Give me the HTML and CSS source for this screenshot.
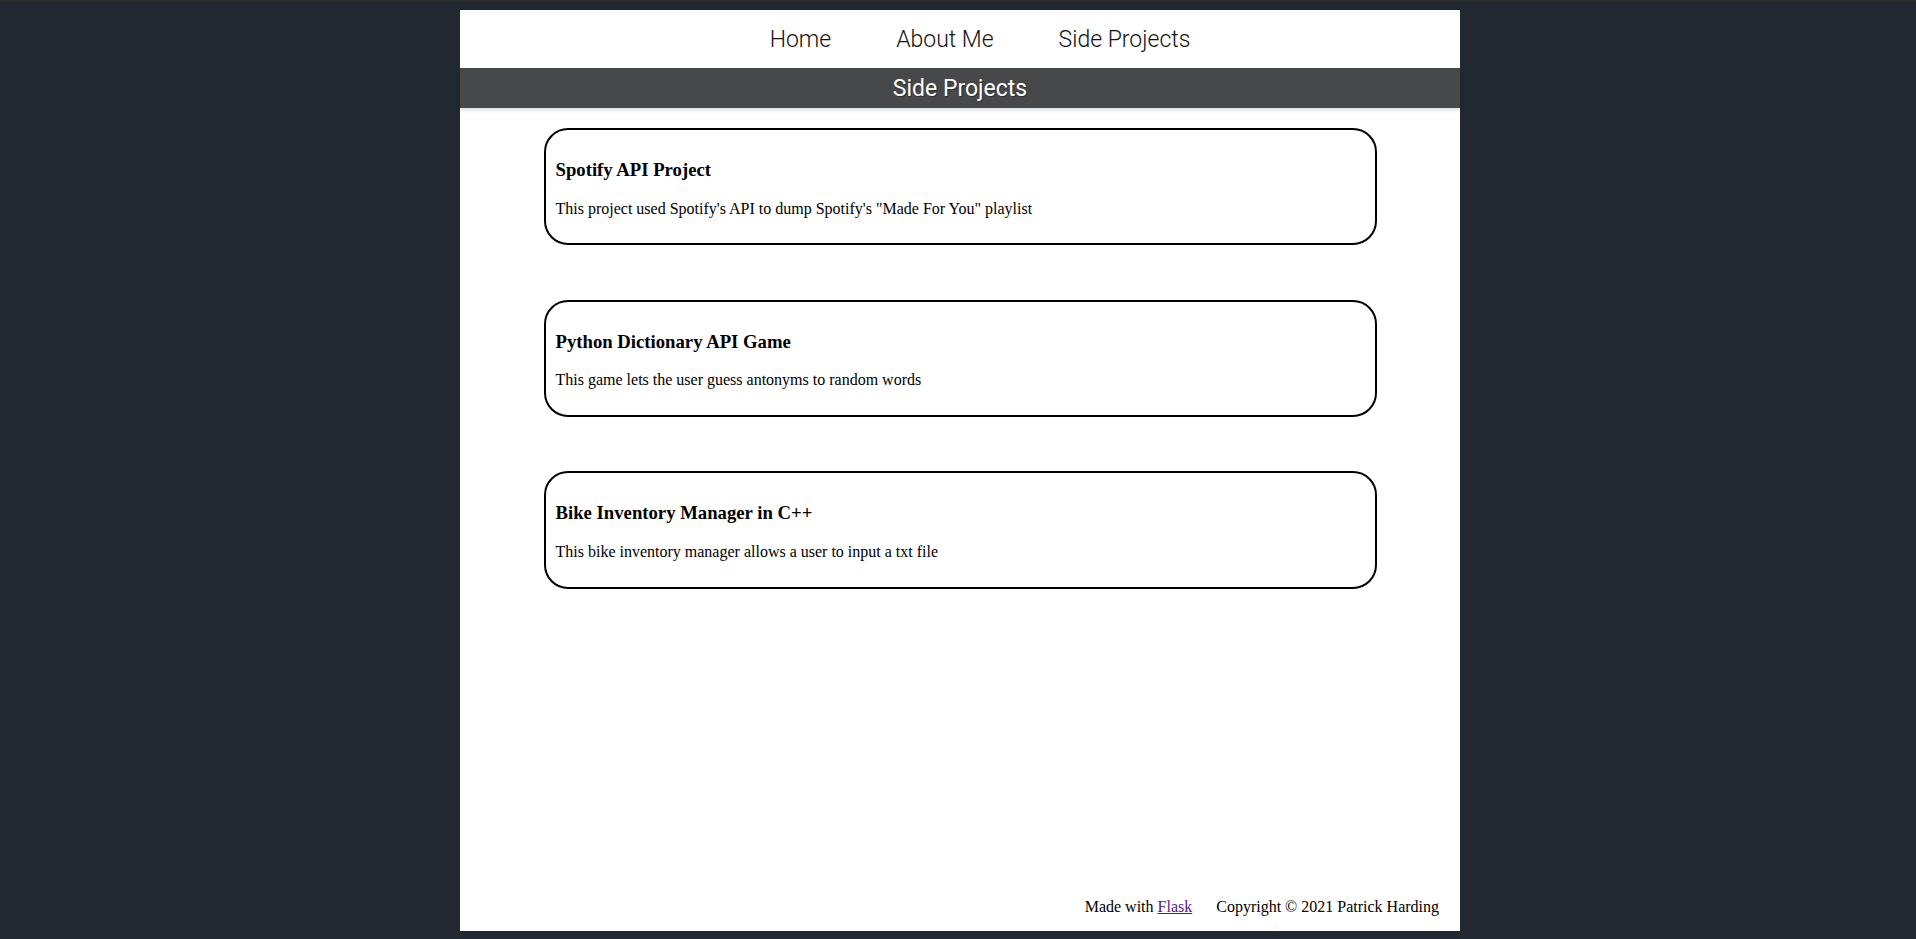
FILE: index.html
```html
<!DOCTYPE html>
<html lang="en">
<head>
<meta charset="utf-8">
<title>Side Projects</title>
<link rel="stylesheet" href="styles.css">
</head>
<body>
<div class="topline"></div>
<div class="page">
  <nav class="nav">
    <ul class="nav-list">
      <li><a class="nav-link" href="#">Home</a></li>
      <li><a class="nav-link" href="#">About Me</a></li>
      <li><a class="nav-link" href="#">Side Projects</a></li>
    </ul>
  </nav>
  <div class="title-bar">Side Projects</div>
  <main class="projects">
    <div class="card">
      <h3 class="card-title">Spotify API Project</h3>
      <p class="card-text">This project used Spotify's API to dump Spotify's "Made For You" playlist</p>
    </div>
    <div class="card">
      <h3 class="card-title">Python Dictionary API Game</h3>
      <p class="card-text">This game lets the user guess antonyms to random words</p>
    </div>
    <div class="card">
      <h3 class="card-title">Bike Inventory Manager in C++</h3>
      <p class="card-text">This bike inventory manager allows a user to input a txt file</p>
    </div>
  </main>
  <footer class="footer">
    <span>Made with <a class="flask" href="#">Flask</a></span>
    <span>Copyright © 2021 Patrick Harding</span>
  </footer>
</div>
</body>
</html>
```
FILE: styles.css
```css
html, body {
  margin: 0;
  padding: 0;
}
body {
  background: #222831;
  font-family: "Liberation Serif", "Times New Roman", serif;
  color: #000;
  min-height: 939px;
  padding-left: 4px;
  box-sizing: border-box;
}
.topline {
  height: 2px;
  margin-left: -4px;
  background: #2b2b2c;
}
.page {
  width: 1000px;
  margin: 8px auto 0;
  background: #fff;
  height: 921px;
  display: flex;
  flex-direction: column;
}
.nav {
  height: 58px;
  display: flex;
  align-items: center;
}
.nav-list {
  list-style: none;
  margin: 0;
  padding: 0 0 0 40px;
  width: 100%;
  box-sizing: border-box;
  display: flex;
  justify-content: center;
  gap: 65px;
}
.nav-link {
  font-family: Roboto, "Liberation Sans", sans-serif;
  font-weight: 300;
  font-size: 23px;
  color: #111;
  text-decoration: none;
}
.title-bar {
  height: 40px;
  background: #474849;
  color: #fff;
  font-family: Roboto, "Liberation Sans", sans-serif;
  font-weight: 400;
  font-size: 23px;
  display: flex;
  align-items: center;
  justify-content: center;
  text-shadow: 1px 1px 1px rgba(0,0,0,0.35);
  box-shadow: 0 2px 4px rgba(0,0,0,0.15);
  position: relative;
}
.projects {
  flex: 1;
  padding-top: 20px;
  display: flex;
  flex-direction: column;
  align-items: center;
  gap: 54.5px;
}
.card {
  box-sizing: border-box;
  width: 833px;
  border: 2px solid #000;
  border-radius: 24px;
  padding: 0 10px;
}
.card-title {
  font-size: 18.72px;
  font-weight: bold;
  margin: 29px 0 18.72px;
  line-height: normal;
}
.card-text {
  font-size: 16px;
  margin: 0 0 25.5px;
  line-height: normal;
}
.footer {
  display: flex;
  justify-content: flex-end;
  gap: 24px;
  padding: 0 21px 15px 0;
  font-size: 16px;
}
.flask {
  color: #551a8b;
}
```
